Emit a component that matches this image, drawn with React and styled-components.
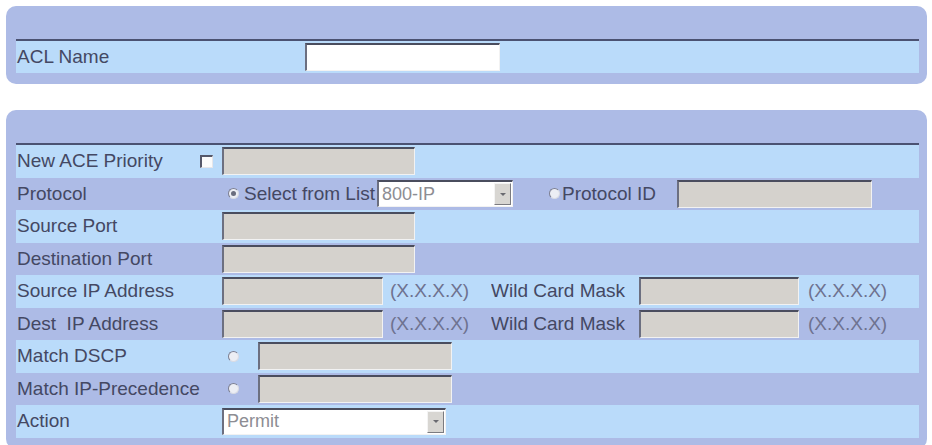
import React from "react";
import styled, { createGlobalStyle, css } from "styled-components";

const GlobalStyle = createGlobalStyle`
  html, body {
    margin: 0;
    padding: 0;
    background: #ffffff;
  }
  body {
    font-family: "Liberation Sans", Arial, sans-serif;
    font-size: 19px;
    color: #444863;
  }
`;

const LIGHT = "#badbfa";
const DARK = "#adbbe6";

const Page = styled.div`
  padding: 6px 5px 0 6px;
  display: flex;
  flex-direction: column;
  gap: 26px;
`;

const Panel = styled.div`
  background: ${DARK};
  border-radius: 10px;
  padding: 33px 8px 11px 10px;
`;

const Table = styled.div`
  border-top: 2px solid #4b5272;
  display: flex;
  flex-direction: column;
`;

const Row = styled.div`
  display: flex;
  align-items: center;
  height: ${(p) => p.$height || 32.5}px;
  background: ${(p) => (p.$dark ? DARK : LIGHT)};
`;

const LabelCell = styled.div`
  flex: none;
  width: ${(p) => p.$width || 206}px;
  box-sizing: border-box;
  padding-left: 1px;
  padding-right: 9px;
  display: flex;
  align-items: center;
  justify-content: space-between;
  white-space: pre;
`;

const FieldCell = styled.div`
  flex: 1;
  display: flex;
  align-items: center;
  height: 100%;
`;

const sunken = css`
  box-sizing: border-box;
  border-style: solid;
  border-width: 2px 1px 1px 2px;
  border-color: #4a4d5e #f2f2f2 #f2f2f2 #6c6f80;
`;

const TextBox = styled.div`
  ${sunken};
  flex: none;
  width: ${(p) => p.$width}px;
  height: 28px;
  margin-left: ${(p) => p.$offset || 0}px;
  background: ${(p) => (p.$enabled ? "#ffffff" : "#d5d2cd")};
`;

const SelectBox = styled.div`
  ${sunken};
  flex: none;
  width: ${(p) => p.$width}px;
  height: 27px;
  margin-left: ${(p) => p.$offset || 0}px;
  background: #ffffff;
  display: flex;
  align-items: center;
  justify-content: space-between;
  padding: 0 1px 0 3px;
  color: #8d8d93;
  font-size: 18px;
`;

const ArrowButton = styled.span`
  box-sizing: border-box;
  width: 17px;
  height: 22px;
  background: #d8d6d2;
  border-style: solid;
  border-width: 1px;
  border-color: #f4f4f4 #7b7b80 #7b7b80 #f4f4f4;
  display: flex;
  align-items: center;
  justify-content: center;
  &::after {
    content: "";
    border-left: 3px solid transparent;
    border-right: 3px solid transparent;
    border-top: 3px solid #6a6a70;
  }
`;

const CheckBox = styled.span`
  box-sizing: border-box;
  width: 13px;
  height: 13px;
  background: #fbfbfb;
  border-style: solid;
  border-width: 2px 1px 1px 2px;
  border-color: #55586a #e6e6ea #e6e6ea #55586a;
`;

const Radio = styled.span`
  flex: none;
  box-sizing: border-box;
  position: relative;
  width: 11px;
  height: 11px;
  border-radius: 50%;
  margin-left: ${(p) => p.$offset || 0}px;
  margin-right: ${(p) => p.$gap || 0}px;
  background: #eceef4;
  border: 1px solid;
  border-color: #7c7f92 #d9dbe4 #d9dbe4 #7c7f92;
  ${(p) =>
    p.$checked &&
    css`
      &::after {
        content: "";
        position: absolute;
        left: 2px;
        top: 2px;
        width: 5px;
        height: 5px;
        border-radius: 50%;
        background: #6a6d7e;
      }
    `}
`;

const Caption = styled.span`
  flex: none;
  width: ${(p) => (p.$width ? `${p.$width}px` : "auto")};
  margin-left: ${(p) => p.$offset || 0}px;
  white-space: nowrap;
  overflow: hidden;
  color: ${(p) => (p.$muted ? "#6e7290" : "#444863")};
`;

const AddressPair = ({ dark, label }) => (
  <Row $dark={dark}>
    <LabelCell>{label}</LabelCell>
    <FieldCell>
      <TextBox $width={161} />
      <Caption $muted $offset={7} $width={101}>
        (X.X.X.X)
      </Caption>
      <Caption $width={148}>Wild Card Mask</Caption>
      <TextBox $width={160} />
      <Caption $muted $offset={9}>
        (X.X.X.X)
      </Caption>
    </FieldCell>
  </Row>
);

export default function App() {
  return (
    <>
      <GlobalStyle />
      <Page>
        <Panel>
          <Table>
            <Row $height={32}>
              <LabelCell $width={289}>ACL Name</LabelCell>
              <FieldCell>
                <TextBox $enabled $width={195} />
              </FieldCell>
            </Row>
          </Table>
        </Panel>

        <Panel>
          <Table>
            <Row>
              <LabelCell>
                New ACE Priority
                <CheckBox />
              </LabelCell>
              <FieldCell>
                <TextBox $width={193} />
              </FieldCell>
            </Row>
            <Row $dark>
              <LabelCell>Protocol</LabelCell>
              <FieldCell>
                <Radio $checked $offset={6} $gap={5} />
                <Caption $width={133}>Select from List</Caption>
                <SelectBox $width={136}>
                  800-IP
                  <ArrowButton />
                </SelectBox>
                <Radio $offset={36} $gap={2} />
                <Caption $width={115}>Protocol ID</Caption>
                <TextBox $width={195} />
              </FieldCell>
            </Row>
            <Row>
              <LabelCell>Source Port</LabelCell>
              <FieldCell>
                <TextBox $width={193} />
              </FieldCell>
            </Row>
            <Row $dark>
              <LabelCell>Destination Port</LabelCell>
              <FieldCell>
                <TextBox $width={193} />
              </FieldCell>
            </Row>
            <AddressPair label="Source IP Address" />
            <AddressPair dark label="Dest  IP Address" />
            <Row>
              <LabelCell>Match DSCP</LabelCell>
              <FieldCell>
                <Radio $offset={6} $gap={19} />
                <TextBox $width={194} />
              </FieldCell>
            </Row>
            <Row $dark>
              <LabelCell>Match IP-Precedence</LabelCell>
              <FieldCell>
                <Radio $offset={6} $gap={19} />
                <TextBox $width={194} />
              </FieldCell>
            </Row>
            <Row>
              <LabelCell>Action</LabelCell>
              <FieldCell>
                <SelectBox $width={224}>
                  Permit
                  <ArrowButton />
                </SelectBox>
              </FieldCell>
            </Row>
          </Table>
        </Panel>
      </Page>
    </>
  );
}
